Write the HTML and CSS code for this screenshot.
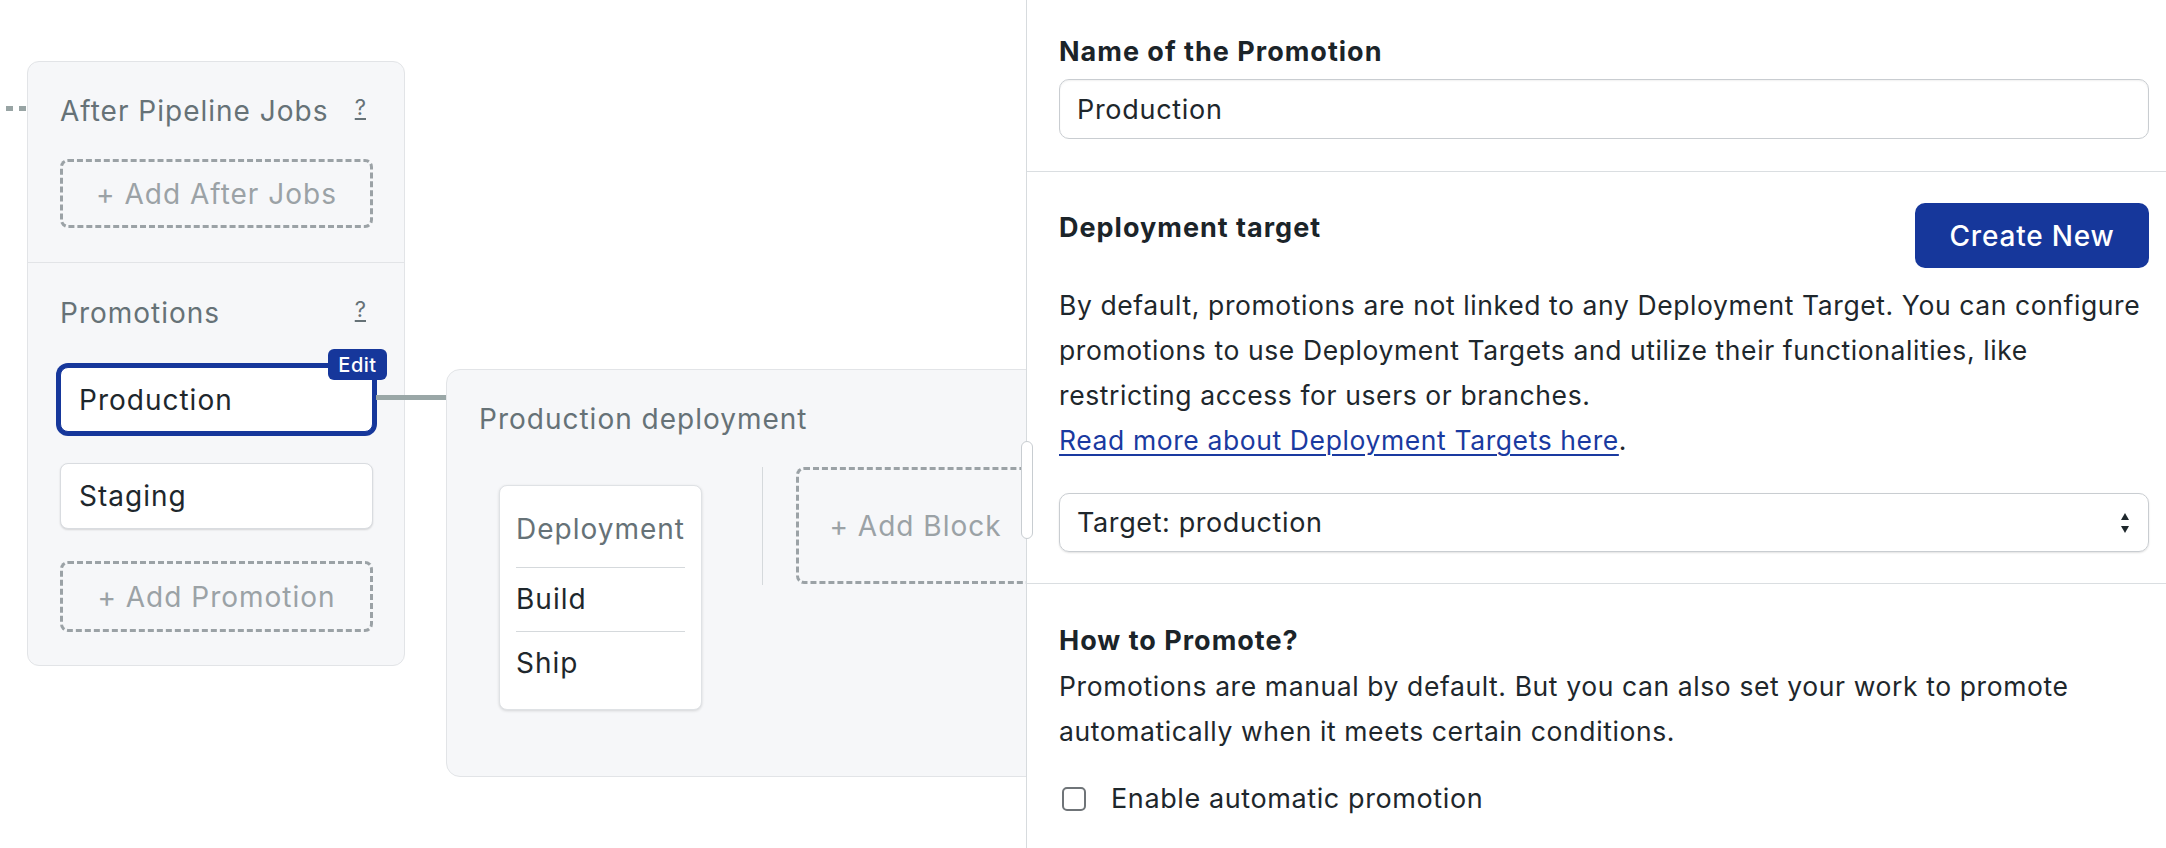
FILE: index.html
```html
<!DOCTYPE html>
<html>
<head>
<meta charset="utf-8">
<link rel="stylesheet" href="styles.css">
</head>
<body>
<div class="page">
  <div class="canvas">
    <div class="after-card">
      <section class="ac-section">
        <div class="ac-head"><span class="ac-title">After Pipeline Jobs</span><span class="help">?</span></div>
        <div class="dashed add-after">+ Add After Jobs</div>
      </section>
      <section class="ac-section promotions">
        <div class="ac-head"><span class="ac-title">Promotions</span><span class="help">?</span></div>
        <div class="promo selected">Production<span class="edit">Edit</span></div>
        <div class="promo staging">Staging</div>
        <div class="dashed add-promo">+ Add Promotion</div>
      </section>
    </div>
    <div class="pipeline">
      <div class="pipe-title">Production deployment</div>
      <div class="blocks">
        <div class="block">
          <div class="block-name">Deployment</div>
          <div class="job">Build</div>
          <div class="job">Ship</div>
        </div>
        <div class="vsep"></div>
        <div class="dashed add-block">+ Add Block</div>
      </div>
    </div>
  </div>
  <aside class="panel">
    <div class="handle"></div>
    <section class="p-section name-section">
      <div class="p-label">Name of the Promotion</div>
      <div class="input">Production</div>
    </section>
    <section class="p-section target-section">
      <div class="target-head">
        <div class="p-label target-label">Deployment target</div>
        <button class="btn-primary">Create New</button>
      </div>
      <p class="p-text target-text">By default, promotions are not linked to any Deployment Target. You can configure<br>promotions to use Deployment Targets and utilize their functionalities, like<br>restricting access for users or branches.</p>
      <div class="p-text link-line"><a class="link" href="#">Read more about Deployment Targets here</a>.</div>
      <div class="select">
        <span>Target: production</span>
        <svg class="sel-arrows" width="10" height="22" viewBox="0 0 10 22"><path d="M5 1 L9 8 L1 8 Z" fill="#1e272c"/><path d="M1 14 L9 14 L5 21 Z" fill="#1e272c"/></svg>
      </div>
    </section>
    <section class="p-section promote-section">
      <div class="p-label promote-label">How to Promote?</div>
      <p class="p-text promote-text">Promotions are manual by default. But you can also set your work to promote<br>automatically when it meets certain conditions.</p>
      <label class="check-row"><span class="checkbox"></span><span>Enable automatic promotion</span></label>
    </section>
  </aside>
</div>
</body>
</html>
```

FILE: styles.css
```css
html, body {
  margin: 0;
  padding: 0;
  background: #ffffff;
}
body {
  font-family: "Inter", "Noto Sans", sans-serif;
  color: #1e272c;
  width: 2166px;
  height: 848px;
  overflow: hidden;
}
.page {
  display: flex;
  height: 848px;
}

/* ---------- canvas ---------- */
.canvas {
  flex: 0 0 1026px;
  box-sizing: border-box;
  overflow: hidden;
  display: flex;
  align-items: flex-start;
  padding: 61px 0 0 27px;
  letter-spacing: 1px;
}
.after-card {
  position: relative;
  flex: 0 0 378px;
  box-sizing: border-box;
  background: #f6f7f9;
  border: 1px solid #e2e4e7;
  border-radius: 12px;
}
.after-card::before {
  content: "";
  position: absolute;
  right: 100%;
  top: 44px;
  width: 28px;
  height: 5px;
  background: repeating-linear-gradient(to left, transparent 0 2px, #98a4a4 2px 9px, transparent 9px 13px);
}
.ac-section {
  padding: 32px 31px 34px 32px;
}
.ac-section.promotions {
  border-top: 1px solid #e2e4e7;
  padding: 33px 31px 33px 32px;
}
.ac-head {
  display: flex;
  justify-content: space-between;
  align-items: flex-start;
  height: 34px;
  font-size: 28px;
  line-height: 34px;
  color: #667277;
}
.help {
  font-size: 22px;
  line-height: 21px;
  margin-top: 3px;
  letter-spacing: 0;
  text-decoration: underline;
  text-decoration-thickness: 1.5px;
  text-underline-offset: 3px;
  margin-right: 7px;
}
.dashed {
  box-sizing: border-box;
  display: flex;
  align-items: center;
  justify-content: center;
  border: 3px dashed #9ba2a6;
  border-radius: 8px;
  color: #9ba2a6;
  font-size: 28px;
}
.add-after {
  margin-top: 31px;
  height: 69px;
}
.promo {
  position: relative;
  box-sizing: border-box;
  display: flex;
  align-items: center;
  padding-left: 18px;
  background: #ffffff;
  border: 1px solid #d9dce0;
  border-radius: 8px;
  font-size: 28px;
  color: #1e272c;
  box-shadow: 0 1px 2px rgba(0, 0, 0, 0.14);
}
.promo.selected {
  margin-top: 37px;
  height: 65px;
  border-color: #16379b;
  box-shadow: 0 0 0 4px #16379b;
}
.promo.selected::after {
  content: "";
  position: absolute;
  left: calc(100% + 4px);
  top: 27px;
  width: 70px;
  height: 5px;
  background: #9aa7a7;
}
.edit {
  position: absolute;
  right: -15px;
  top: -19px;
  width: 59px;
  height: 31px;
  box-sizing: border-box;
  display: flex;
  align-items: center;
  justify-content: center;
  background: #16379b;
  color: #ffffff;
  border-radius: 6px;
  font-size: 20px;
  font-weight: 500;
  letter-spacing: 0.5px;
}
.promo.staging {
  margin-top: 31px;
  height: 66px;
}
.add-promo {
  margin-top: 32px;
  height: 71px;
}

.pipeline {
  flex: 0 0 700px;
  box-sizing: border-box;
  margin: 308px 0 0 41px;
  padding: 32px 0 66px 32px;
  background: #f6f7f9;
  border: 1px solid #e2e4e7;
  border-radius: 14px;
}
.pipe-title {
  font-size: 28px;
  line-height: 34px;
  color: #667277;
}
.blocks {
  display: flex;
  align-items: flex-start;
  margin-top: 31px;
  padding-left: 20px;
}
.block {
  flex: 0 0 203px;
  box-sizing: border-box;
  margin-top: 18px;
  padding: 0 16px 14px 16px;
  background: #ffffff;
  border: 1px solid #dfe2e5;
  border-radius: 8px;
  box-shadow: 0 1px 3px rgba(0, 0, 0, 0.14);
  font-size: 28px;
  line-height: 34px;
}
.block-name {
  padding: 26px 0 21px;
  color: #667277;
}
.job {
  border-top: 1px solid #d5d9dc;
  padding: 14px 0 15px;
  color: #1e272c;
}
.vsep {
  flex: 0 0 1px;
  height: 118px;
  margin-left: 60px;
  background: #d5d9dc;
}
.add-block {
  flex: 0 0 239px;
  height: 117px;
  margin-left: 33px;
}

/* ---------- side panel ---------- */
.panel {
  position: relative;
  flex: 0 0 1140px;
  box-sizing: border-box;
  border-left: 1px solid #d7dbde;
  background: #ffffff;
}
.handle {
  position: absolute;
  left: -6px;
  top: 441px;
  width: 12px;
  height: 98px;
  box-sizing: border-box;
  background: #ffffff;
  border: 1px solid #c8cdd1;
  border-radius: 6px;
}
.p-section {
  padding: 0 17px 0 32px;
  border-bottom: 1px solid #dadee1;
}
.p-label {
  font-size: 27px;
  line-height: 30px;
  font-weight: 700;
  letter-spacing: 1px;
  color: #1b2429;
}
.name-section {
  padding-top: 37px;
  padding-bottom: 32px;
}
.input {
  box-sizing: border-box;
  margin-top: 12px;
  height: 60px;
  display: flex;
  align-items: center;
  padding-left: 17px;
  border: 1px solid #c9cdd1;
  border-radius: 10px;
  font-size: 27px;
  letter-spacing: 0.7px;
  color: #1e272c;
  box-shadow: inset 0 1px 2px rgba(0, 0, 0, 0.06);
}
.target-section {
  padding-top: 31px;
  padding-bottom: 31px;
}
.target-head {
  display: flex;
  justify-content: space-between;
  align-items: flex-start;
}
.target-label {
  margin-top: 10px;
}
.btn-primary {
  width: 234px;
  height: 65px;
  border: none;
  border-radius: 10px;
  background: #16379b;
  color: #ffffff;
  font-family: inherit;
  font-size: 28px;
  font-weight: 500;
  letter-spacing: 0.8px;
  padding: 0;
}
.p-text {
  margin: 0;
  font-size: 26.5px;
  line-height: 45px;
  letter-spacing: 0.6px;
  color: #1e272c;
}
.target-text {
  margin-top: 15px;
}
.link {
  color: #1a3aa0;
  text-decoration: underline;
  text-decoration-thickness: 2px;
  text-underline-offset: 4px;
}
.select {
  box-sizing: border-box;
  margin-top: 30px;
  height: 59px;
  display: flex;
  align-items: center;
  justify-content: space-between;
  padding: 0 18px 0 17px;
  border: 1px solid #c9cdd1;
  border-radius: 10px;
  font-size: 27px;
  letter-spacing: 0.6px;
  color: #1e272c;
  box-shadow: 0 1px 2px rgba(0, 0, 0, 0.12);
}
.promote-section {
  border-bottom: none;
  padding-top: 42px;
}
.promote-text {
  margin-top: 8px;
  line-height: 45px;
}
.check-row {
  display: flex;
  align-items: center;
  margin-top: 22px;
  font-size: 27px;
  line-height: 45px;
  letter-spacing: 0.6px;
  color: #1e272c;
}
.checkbox {
  box-sizing: border-box;
  width: 24px;
  height: 24px;
  margin: 0 25px 0 3px;
  border: 2px solid #6f7478;
  border-radius: 5px;
  background: #ffffff;
}
```
